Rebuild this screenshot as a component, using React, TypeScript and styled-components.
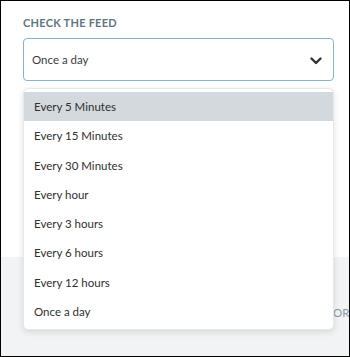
import React from "react"
import styled, { createGlobalStyle } from "styled-components"

const options = [
  "Every 5 Minutes",
  "Every 15 Minutes",
  "Every 30 Minutes",
  "Every hour",
  "Every 3 hours",
  "Every 6 hours",
  "Every 12 hours",
  "Once a day",
]

const GlobalStyle = createGlobalStyle`
  html, body {
    margin: 0;
    padding: 0;
    background: #ffffff;
  }
  body {
    font-family: Lato, "Open Sans", sans-serif;
  }
`

const Frame = styled.div`
  box-sizing: border-box;
  width: 350px;
  height: 357px;
  border: 1px solid #000;
  display: flex;
  flex-direction: column;
  position: relative;
  overflow: hidden;
`

const Panel = styled.section`
  box-sizing: border-box;
  height: 256px;
  padding: 14px 15px 0 22px;
  background: #ffffff;
`

const Label = styled.div`
  font-size: 11px;
  line-height: 15px;
  font-weight: 700;
  letter-spacing: 0.25px;
  text-transform: uppercase;
  color: #5f7682;
  margin-bottom: 8px;
`

const Field = styled.div`
  position: relative;
`

const SelectBox = styled.div`
  box-sizing: border-box;
  height: 43px;
  border: 1px solid #86b3d1;
  border-radius: 4px;
  display: flex;
  align-items: center;
  justify-content: space-between;
  padding: 0 11px 0 8px;
  font-size: 11.5px;
  color: #3b3b3b;
`

const Chevron = styled.svg`
  width: 12px;
  height: 8px;
  margin-top: 2px;
`

const Menu = styled.ul`
  box-sizing: border-box;
  position: absolute;
  top: calc(100% + 7px);
  left: 0;
  right: 0;
  margin: 0;
  padding: 3px 0;
  list-style: none;
  background: #fff;
  border: 1px solid #e6e8eb;
  border-radius: 5px;
  box-shadow: 0 2px 6px rgba(0, 0, 0, 0.12);
  z-index: 2;
`

const Item = styled.li<{ $active?: boolean }>`
  height: 29.25px;
  display: flex;
  align-items: center;
  padding-left: 10px;
  font-size: 11.5px;
  color: #2f2f2f;
  background: ${p => (p.$active ? "#d4d9de" : "transparent")};
`

const Footer = styled.section`
  flex: 1;
  background: #f1f3f5;
  display: flex;
  padding: 47px 0 0 332px;
  white-space: nowrap;
`

const OrText = styled.span`
  font-size: 11.5px;
  line-height: 18px;
  color: #8a99a3;
`

const App = () => (
  <>
    <GlobalStyle />
    <Frame>
      <Panel>
        <Label>Check the feed</Label>
        <Field>
          <SelectBox>
            <span>Once a day</span>
            <Chevron viewBox="0 0 12 8">
              <polyline
                points="1.5,1.5 6,6 10.5,1.5"
                fill="none"
                stroke="#333"
                strokeWidth="2.4"
                strokeLinecap="round"
                strokeLinejoin="round"
              />
            </Chevron>
          </SelectBox>
          <Menu>
            {options.map((o, i) => (
              <Item key={o} $active={i === 0}>
                {o}
              </Item>
            ))}
          </Menu>
        </Field>
      </Panel>
      <Footer>
        <OrText>OR</OrText>
      </Footer>
    </Frame>
  </>
)

export default App
